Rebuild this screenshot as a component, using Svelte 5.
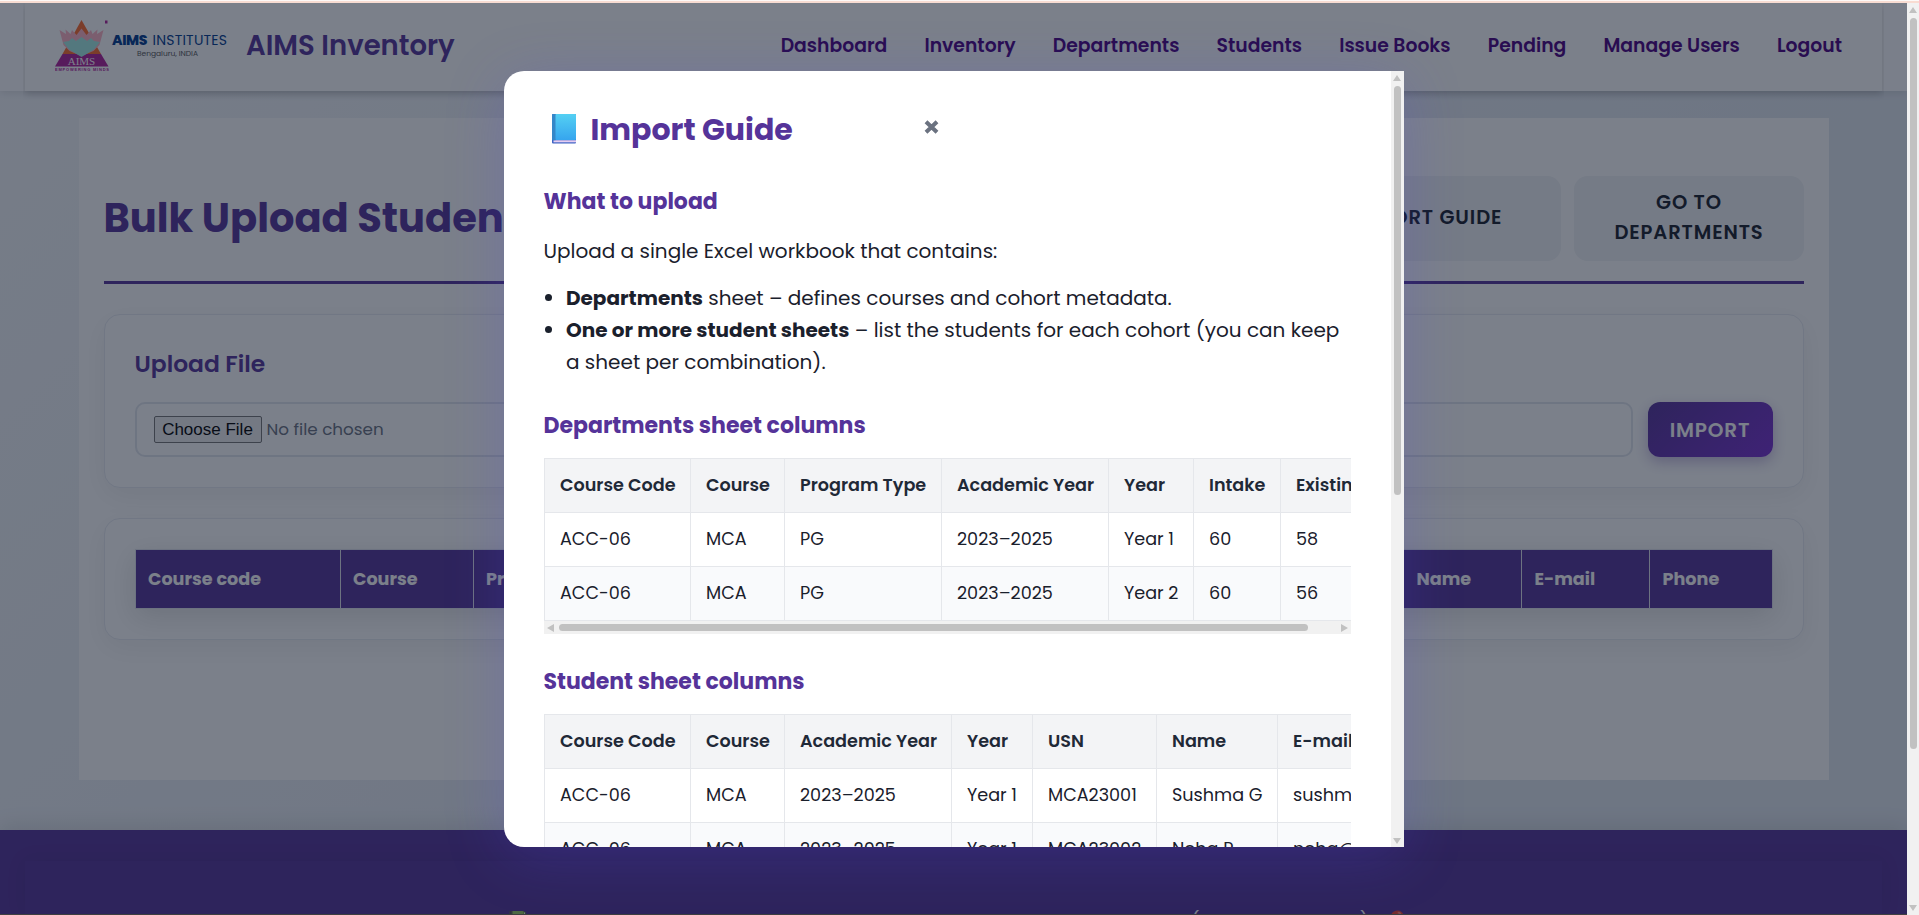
<script>
  const nav = ['Dashboard', 'Inventory', 'Departments', 'Students', 'Issue Books', 'Pending', 'Manage Users', 'Logout'];

  const resultColumns = [
    ['Course code', 205], ['Course', 133], ['Program type', 200], ['Academic year', 205],
    ['Year', 130], ['USN', 180], ['Section', 215.5], ['Name', 118], ['E-mail', 128], ['Phone', 122]
  ];

  const departments = {
    widths: [146, 94, 157, 167, 85, 87, 104],
    head: ['Course Code', 'Course', 'Program Type', 'Academic Year', 'Year', 'Intake', 'Existing'],
    rows: [
      ['ACC-06', 'MCA', 'PG', '2023–2025', 'Year 1', '60', '58'],
      ['ACC-06', 'MCA', 'PG', '2023–2025', 'Year 2', '60', '56']
    ]
  };

  const students = {
    widths: [146, 94, 167, 81, 124, 121, 220],
    head: ['Course Code', 'Course', 'Academic Year', 'Year', 'USN', 'Name', 'E-mail'],
    rows: [
      ['ACC-06', 'MCA', '2023–2025', 'Year 1', 'MCA23001', 'Sushma G', 'sushma@example.com'],
      ['ACC-06', 'MCA', '2023–2025', 'Year 1', 'MCA23002', 'Neha R', 'neha@example.com']
    ]
  };

  // Footer line, each piece with the room it takes up to the next one.
  const footLine = [
    ['📗', 55], ['2025', 298], ['i', 62], ['t', 54], ['l', 11], ['l', 35], ['t', 36], ['t', 58], ['t', 49],
    ['l', 27], ['(', 51], ['t', 64], ['t', 54], [')', 26], ['🎈', 20]
  ];

  // Spreads the letters of a logo word so that it takes the given width.
  function fit(node, width) {
    const natural = node.getBoundingClientRect().width;
    const spacing = (width + 1 - natural) / (node.textContent.length - 1);
    node.style.letterSpacing = `${spacing}px`;
    node.style.marginRight = `${-spacing}px`;
  }
</script>

{#snippet label(text, width)}<span class="fit" use:fit={width}>{text}</span>{/snippet}

{#snippet sheet(data)}
  <table style="width: {data.widths.reduce((a, b) => a + b, 1)}px">
    <colgroup>{#each data.widths as w}<col style="width: {w}px" />{/each}</colgroup>
    <thead>
      <tr>{#each data.head as text}<th>{text}</th>{/each}</tr>
    </thead>
    <tbody>
      {#each data.rows as row}
        <tr>{#each row as text}<td>{text}</td>{/each}</tr>
      {/each}
    </tbody>
  </table>
{/snippet}

<div class="window">
  <div class="page">
    <header>
      <div class="bar">
        <div class="logo">
          <svg width="60" height="56" viewBox="0 0 60 56">
            <path d="M26.500 2 46 36H7.500z" fill="#ff6a2c" />
            <path d="M7.500 36h38.500l7.500 12.500H0z" fill="#b0209a" />
            <path d="M4.500 12l6.500 4-.5-4.500 5 4.500 1.500-4 4.500 5 5-6.500 5 6.500 4.500-5 1.500 4 5-4.500-.5 4.500 6.500-4-4 15-6 6-12 5-12-5-6-6z" fill="#ffb4c4" />
            <path d="M8 24l6-1 3-3 4 3 5.500-4 5.500 4 4-3 3 3 6 1-6 7.500L26.500 39 14 31.500z" fill="#a6eee4" />
            <text x="26.500" y="46.800" text-anchor="middle" class="logo-aims">AIMS</text>
            <text x="0" y="53.200" textLength="54" class="logo-motto">EMPOWERING MINDS</text>
            <path d="M50 2.500h2.500v3H50z" fill="#b0209a" />
          </svg>
          <div class="logo-words">
            <div class="logo-line"><b>{@render label('AIMS', 34.5)}</b>{@render label('INSTITUTES', 73.5)}</div>
            <div class="logo-city">{@render label('Bengaluru, INDIA', 60)}</div>
          </div>
        </div>
        <div class="brand">AIMS Inventory</div>
        <nav>
          {#each nav as text}<a href="#top">{text}</a>{/each}
        </nav>
      </div>
    </header>

    <main>
      <div class="heading">
        <h1>Bulk Upload Students</h1>
        <div class="actions">
          <button class="ghost guide">IMPORT GUIDE</button>
          <button class="ghost">GO TO<br />DEPARTMENTS</button>
        </div>
      </div>

      <section class="card upload">
        <h2>Upload File</h2>
        <div class="row">
          <div class="file">
            <span class="choose">Choose File</span>
            <span class="none">No file chosen</span>
          </div>
          <button class="primary">IMPORT</button>
        </div>
      </section>

      <section class="card results">
        <div class="grid">
          {#each resultColumns as [text, w]}
            <div class="col" style="width: {w}px">{text}</div>
          {/each}
        </div>
      </section>
    </main>

    <footer>
      <div class="foot">
        {#each footLine as [text, w]}<span style="width: {w}px">{text}</span>{/each}
      </div>
    </footer>
  </div>

  <div class="scroll page-scroll">
    <i class="up"></i><b class="thumb"></b><i class="down"></i>
  </div>

  <div class="overlay">
    <div class="modal">
      <div class="body">
        <div class="title">
          <svg class="book" width="24" height="30" viewBox="0 0 24 30">
            <defs>
              <linearGradient id="cover" x1="0" y1="0" x2="0" y2="1">
                <stop offset="0" stop-color="#54d0f3" /><stop offset="1" stop-color="#36a5ee" />
              </linearGradient>
            </defs>
            <rect x="0" y="0" width="24" height="29.500" rx="1" fill="#3c62c4" />
            <rect x="1.500" y="26.300" width="22.500" height="2" fill="#e5cdf2" />
            <rect x="0" y="0" width="4" height="26.300" rx="1" fill="#3487c8" />
            <rect x="3.500" y="0" width="20.500" height="26" rx=".8" fill="url(#cover)" />
          </svg>
          <h2>Import Guide</h2>
          <svg class="close" width="15" height="14" viewBox="0 0 15 14">
            <path d="M2 1.700l11 10.600M13 1.700 2 12.300" stroke="#6b7280" stroke-width="4" />
          </svg>
        </div>

        <h3>What to upload</h3>
        <p>Upload a single Excel workbook that contains:</p>
        <ul>
          <li><strong>Departments</strong> sheet – defines courses and cohort metadata.</li>
          <li><strong>One or more student sheets</strong> – list the students for each cohort (you can keep a sheet per combination).</li>
        </ul>

        <h3>Departments sheet columns</h3>
        <div class="clip">{@render sheet(departments)}</div>
        <div class="scroll across"><i class="left"></i><b class="thumb"></b><i class="right"></i></div>

        <h3>Student sheet columns</h3>
        <div class="clip">{@render sheet(students)}</div>
      </div>
      <div class="scroll modal-scroll">
        <i class="up"></i><b class="thumb"></b><i class="down"></i>
      </div>
    </div>
  </div>
</div>

<style>
  :global(body) { overflow: hidden; }
  * { box-sizing: border-box; }
  h1, h2, h3, p, ul { margin: 0; }
  h1, h2, h3, strong { font-weight: 700; }

  .window {
    position: relative;
    display: flex;
    width: 1919px;
    height: 915px;
    padding-top: 3px;
    overflow: hidden;
    font-family: Poppins, Inter, sans-serif;
    color: #1a202c;
    background: linear-gradient(#fdf9f7 0 1px, #f8dcd2 1px 3px, #fff 3px);
  }
  .fit { display: inline-block; white-space: pre; }

  .page {
    width: 1907px;
    height: 912px;
    overflow: hidden;
    background: linear-gradient(135deg, #f5f7fa, #e2e8f0 70%);
  }

  header {
    position: relative;
    height: 88px;
    padding: 0 25px;
    background: #fdfdfe;
    box-shadow: 0 2px 8px rgba(0, 0, 0, .1);
  }
  .bar {
    display: flex;
    align-items: center;
    height: 88px;
    padding: 0 40px 2px 30px;
    background: #fff;
    box-shadow: 0 3px 7px rgba(0, 0, 0, .16);
    clip-path: inset(0 -2px -20px -2px);
  }
  .logo { display: flex; width: 191px; }
  .logo-aims { font: 11px "Liberation Serif", serif; fill: #fff; }
  .logo-motto { font: bold 4px "Liberation Sans", sans-serif; fill: #b0209a; }
  .logo-words { padding-top: 14px; margin-left: -3px; }
  .logo-line { display: flex; gap: 5px; font-size: 14px; line-height: 17px; color: #003b8e; }
  .logo-line b { font-weight: 800; }
  .logo-city { padding-left: 25px; font-size: 7.500px; line-height: 10px; color: #555; }
  .brand { font-size: 27.500px; line-height: 40px; font-weight: 600; color: #553399; }
  nav { display: flex; gap: 37.200px; margin-left: auto; }
  nav a { font-size: 18.800px; line-height: 28px; font-weight: 600; color: #4b0082; text-decoration: none; }

  main {
    width: 1750px;
    height: 662px;
    margin: 27px auto 0;
    padding: 58px 25px 0;
    background: #fff;
  }
  .heading {
    display: flex;
    justify-content: space-between;
    height: 108px;
    border-bottom: 3px solid #553399;
  }
  h1 { padding-top: 19px; font-size: 40px; line-height: 46px; color: #553399; }
  .actions { display: flex; gap: 13px; }
  button { border: 0; font-family: inherit; }
  .ghost {
    width: 230px;
    height: 85px;
    padding: 0 0 2px 1px;
    border-radius: 14px;
    background: #f1f3f5;
    font-size: 19.500px;
    line-height: 30px;
    font-weight: 600;
    letter-spacing: .9px;
    color: #1a202c;
  }
  .guide { width: 265px; }

  .card {
    margin-top: 30px;
    padding: 31px 30px;
    border: 1px solid #e8ebf1;
    border-radius: 16px;
    background: #fff;
    box-shadow: 0 8px 28px rgba(0, 0, 0, .06);
  }
  .upload { height: 174px; }
  .results { height: 122px; padding: 30px; }
  .upload h2 { font-size: 23.400px; line-height: 36px; font-weight: 600; color: #553399; }
  .row { display: flex; gap: 15px; margin-top: 20px; }
  .file {
    display: flex;
    align-items: center;
    gap: 5px;
    width: 1498px;
    height: 55px;
    padding: 0 17px;
    border: 2px solid #e3e6ed;
    border-radius: 10px;
    background: #fff;
  }
  .choose {
    width: 108px;
    height: 27px;
    border: 1px solid #767676;
    border-radius: 2px;
    background: #efefef;
    font: 17px/25px "Liberation Sans", Arial, sans-serif;
    text-align: center;
    color: #000;
  }
  .none { padding-bottom: 2px; font-size: 16.800px; line-height: 24px; color: #6b7280; }
  .primary {
    width: 125px;
    height: 55px;
    border-radius: 12px;
    background: linear-gradient(135deg, #553399, #7a30d2);
    box-shadow: 0 5px 14px rgba(85, 51, 153, .32);
    font-size: 20px;
    font-weight: 600;
    letter-spacing: .8px;
    color: #fff;
  }
  .grid {
    display: flex;
    height: 60px;
    border: 1px solid #dfe3ea;
    background: #553399;
    overflow: hidden;
    box-shadow: 0 8px 28px rgba(0, 0, 0, .12);
  }
  .col {
    flex: none;
    padding: 16px 0 0 12.500px;
    border-right: 1px solid #dfe3ea;
    font-size: 17.600px;
    line-height: 26px;
    font-weight: 700;
    color: #fff;
  }
  .col:last-child { border: 0; }

  footer {
    height: 85px;
    margin-top: 50px;
    padding: 31px 25px 0;
    background: #553399;
    box-shadow: 0 -4px 20px rgba(0, 0, 0, .1);
    border-bottom: 1px solid #7f7460;
  }
  .foot {
    display: flex;
    height: 53px;
    padding: 46px 0 0 481px;
    overflow: hidden;
    font-size: 18.500px;
    line-height: 28px;
    color: #fff;
    box-shadow: 0 0 20px rgba(0, 0, 0, .09);
  }
  .foot span { flex: none; }

  .scroll { display: flex; background: #f1f1f1; }
  .scroll i { flex: none; width: 0; height: 0; border: 4.500px solid transparent; }
  .scroll .thumb { border-radius: 4px; background: #c1c1c1; }
  .scroll .up { border-top: 0; border-bottom: 6px solid #c1c1c1; }
  .scroll .down { border-bottom: 0; border-top: 6px solid #c1c1c1; margin-top: auto; }
  .scroll .left { border-left: 0; border-right: 7px solid #c1c1c1; }
  .scroll .right { border-right: 0; border-left: 7px solid #c1c1c1; margin-left: auto; }
  .page-scroll { width: 12px; flex-direction: column; align-items: center; padding: 4px 0; }
  .page-scroll .thumb { width: 7px; height: 731px; margin-top: 5px; }
  .modal-scroll { width: 13px; flex-direction: column; align-items: center; padding: 4px 0 3px; }
  .modal-scroll .thumb { width: 7px; height: 409px; margin-top: 5px; }
  .across { width: 807px; height: 13px; align-items: center; padding: 0 3px; }
  .across .thumb { width: 749px; height: 7px; margin-left: 5px; }

  .overlay {
    position: absolute;
    inset: 3px 12px 0 0;
    display: flex;
    justify-content: center;
    align-items: flex-start;
    padding-top: 68px;
    background: rgba(15, 23, 42, .55);
  }
  .modal {
    display: flex;
    width: 900px;
    height: 776px;
    border-radius: 20px 0 0 20px;
    overflow: hidden;
    background: #fff;
    box-shadow: 0 10px 60px rgba(85, 70, 230, .24);
  }
  .body { width: 887px; height: 776px; padding: 41px 40px 0; overflow: hidden; }
  .title { display: flex; height: 36px; padding-left: 8px; }
  .book { margin-top: 2px; }
  .title h2 { margin-left: 15px; font-size: 30px; line-height: 36px; color: #553399; }
  .close { margin: 8px 0 0 131px; }
  h3 { height: 34px; margin-top: 31px; font-size: 22px; line-height: 34px; color: #553399; }
  .title + h3 { margin-top: 37px; }
  p { margin-top: 16px; font-size: 20px; line-height: 32px; }
  ul { margin-top: 15px; padding-left: 22.500px; font-size: 20px; line-height: 32px; }
  .clip { width: 807px; margin-top: 15px; overflow: hidden; }
  table {
    border-spacing: 0;
    table-layout: fixed;
    border: solid #e5e7eb;
    border-width: 1px 0 0 1px;
    font-size: 17.600px;
    line-height: 26px;
    white-space: nowrap;
  }
  th, td { height: 54px; padding: 0 0 1px 15.500px; border: solid #e5e7eb; border-width: 0 1px 1px 0; text-align: left; }
  th { font-weight: 600; color: #1f2937; background: #f3f4f6; }
  tbody tr:nth-child(2) td { background: #f9fafc; }
</style>
